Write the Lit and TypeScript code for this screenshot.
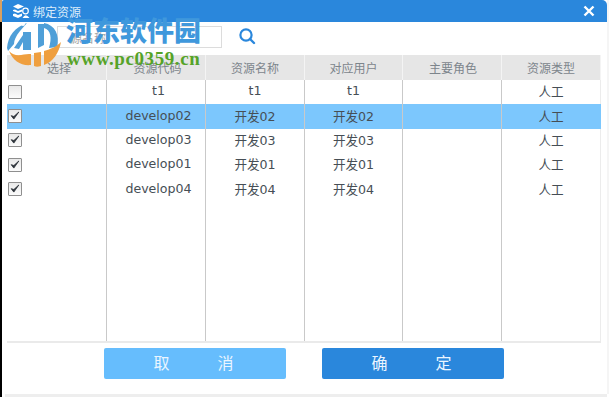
import { LitElement, html, css, svg } from "lit";
import { customElement } from "lit/decorators.js";

const rows = [
  { c: false, code: "t1", name: "t1", user: "t1", sel: false },
  { c: true, code: "develop02", name: "开发02", user: "开发02", sel: true },
  { c: true, code: "develop03", name: "开发03", user: "开发03", sel: false },
  { c: true, code: "develop01", name: "开发01", user: "开发01", sel: false },
  { c: true, code: "develop04", name: "开发04", user: "开发04", sel: false },
];
const heads = ["选择", "资源代码", "资源名称", "对应用户", "主要角色", "资源类型"];

@customElement("app-root")
export class AppRoot extends LitElement {
  static styles = css`
    :host { display: block; width: 609px; height: 400px; position: relative; overflow: hidden; background: #fff;
      font-family: "DejaVu Sans", "Noto Sans CJK SC", sans-serif; color: #464e55; font-size: 12.6px; }
    .frame { height: 394px; box-sizing: border-box; border-right: 2px solid #f5f5f5; border-left: 2px solid #000; display: flex; flex-direction: column; background: #fff; position: relative; }
    .frame::before { content: ""; position: absolute; left: -2px; top: 0; width: 2px; height: 22px; background: #d9a060; }
    .strip { height: 3px; box-sizing: border-box; border-left: 2px solid #000; padding-left: 3px; margin-right: 2px; background: #eeeeee content-box; }
    .title { height: 22px; flex: none; background: #2a87dc; border-radius: 2px 5px 0 0; display: flex; align-items: center; padding: 0 12px 0 9px; font-size: 12px; gap: 3px; }
    .title span { flex: 1; color: #dcecfa; }
    .search { height: 33px; box-sizing: border-box; flex: none; display: flex; align-items: flex-start; padding: 4px 0 0 55px; }
    .box { width: 165px; height: 22px; border: 1px solid #dcdcdc; box-sizing: border-box; display: flex; align-items: center; padding-left: 12px; font-size: 12px; color: #a5a5a5; }
    .search svg { margin: 1px 0 0 16px; }
    .table { margin: 0 6px 0 5px; height: 288px; flex: none; display: grid; grid-template-columns: 100px 99px 99px 98px 99px 99px; grid-template-rows: 25px repeat(5, 24.4px) 1fr; border-bottom: 2px solid #eaeaea; box-sizing: border-box; }
    .h { background: #e6e6e6; display: flex; align-items: center; justify-content: center; color: #7d858c; font-size: 12px; border-right: 1px solid #f4f4f4; box-sizing: border-box; padding-bottom: 1px; }
    .h:nth-child(1) { padding-left: 5px; }
    .h:nth-child(2) { padding-left: 3px; }
    .h:nth-child(5) { padding-left: 2px; }
    .c { display: flex; align-items: center; justify-content: center; border-right: 1px solid #c9c9c9; box-sizing: border-box; padding-bottom: 3px; }
    .c.last { border-right-color: #ececec; }
    .c.sel { background: #7cc7fd; }
    .c.sel.last { border-right-color: #7cc7fd; }
    .c.left { justify-content: flex-start; padding: 0 0 1px 1px; }
    .c.code { padding-left: 5px; }
    .cb { width: 14px; height: 14px; box-sizing: border-box; border: 1px solid #8f8f8f; border-radius: 1px; background: linear-gradient(#e9e9e9, #fbfbfb); display: block; }
    .fill { border-right: 1px solid #c9c9c9; box-sizing: border-box; }
    .fill.last { border-right-color: #ececec; }
    .btns { display: flex; gap: 36px; margin: 5px 0 0 102px; }
    .btn { width: 182px; height: 31px; border-radius: 2px; display: flex; align-items: center; justify-content: center; gap: 48px; color: #eaf5ff; font-size: 16px; padding: 0 3px 3px 0; box-sizing: border-box; }
    .cancel { background: #66bdfd; }
    .ok { background: #2a87dc; }
    .mark { position: absolute; left: 5px; top: 18px; pointer-events: none; }
    .wm1 { position: absolute; left: 66px; top: 14px; font: 900 27px "Noto Sans CJK SC", serif; color: #3f98dc; line-height: 32px; white-space: nowrap; }
    .wm2 { position: absolute; left: 67px; top: 48px; font: bold 19px "Liberation Serif", serif; color: #55a328; line-height: 22px; white-space: nowrap; letter-spacing: .6px; }
  `;

  private check(on: boolean) {
    return html`<svg class="cb" viewBox="0 0 14 14">${on ? svg`<path d="M2.6 6.6 L5.6 10.6 L11.4 2.4 L5.7 7.6 Z" fill="#2b3138" stroke="#2b3138" stroke-width="1"/>` : ""}</svg>`;
  }

  render() {
    return html`
      <div class="frame">
        <div class="title">
          <svg width="19" height="17" viewBox="0 0 19 17"><path d="M2 3.5 L7 1 L13 3.5 L7 6 Z M2 7 L4 6.5 L7 8 L11 6.5 L11 8.5 L7 10 L2 8 Z M2 11 L4 10.5 L7 12 L11 10.5 L11 13 L7 15 L2 13 Z" fill="#fff"/><circle cx="14.5" cy="8" r="2.8" fill="none" stroke="#fff" stroke-width="1.2"/><path d="M11.5 15 Q14.5 9.5 18.5 15 Z" fill="#fff"/></svg>
          <span>绑定资源</span>
          <svg width="12" height="12" viewBox="0 0 12 12"><path d="M1.5 1.5 L10.5 10.5 M10.5 1.5 L1.5 10.5" stroke="#fff" stroke-width="2.4"/></svg>
        </div>
        <div class="search">
          <div class="box">源名称</div>
          <svg width="18" height="18" viewBox="0 0 18 18"><circle cx="8" cy="8" r="5.6" fill="none" stroke="#2a87dc" stroke-width="2.2"/><path d="M12 12 L16 16" stroke="#2a87dc" stroke-width="2.4" stroke-linecap="round"/></svg>
        </div>
        <div class="table">
          ${heads.map((h) => html`<div class="h">${h}</div>`)}
          ${rows.map((r) => {
            const s = r.sel ? "sel" : "";
            return html`
              <div class="c left ${s}">${this.check(r.c)}</div>
              <div class="c code ${s}">${r.code}</div>
              <div class="c ${s}">${r.name}</div>
              <div class="c ${s}">${r.user}</div>
              <div class="c ${s}"></div>
              <div class="c last ${s}">人工</div>`;
          })}
          ${[0, 1, 2, 3, 4, 5].map((i) => html`<div class="fill ${i === 5 ? "last" : ""}"></div>`)}
        </div>
        <div class="btns">
          <div class="btn cancel"><span>取</span><span>消</span></div>
          <div class="btn ok"><span>确</span><span>定</span></div>
        </div>
      </div>
      <div class="strip"></div>
      <svg class="mark" width="60" height="52" viewBox="0 0 60 52">
        <path d="M2 30 C3 18 10 9 22 5 L15 13 C11 18 9 22 9 26 L3 33 Z" fill="#4f9fd8"/>
        <path d="M9 30 L18 17 L18 14 L26 14 L26 32 L18 32 L18 24 L14 31 Z" fill="#4f9fd8"/>
        <path d="M33 6 L39 6 L39 27 L33 30 Z" fill="#4f9fd8"/>
        <path d="M39 5 C50 7 55 17 52 29 L44 30 C47 20 46 12 39 10 Z" fill="#4f9fd8"/>
        <path d="M4 33 C10 40 18 36 24 36 L26 36 L26 47 C16 48 8 43 4 33 Z" fill="#ef9f3f"/>
        <path d="M29 35 L36 34 L36 48 C33 49 31 49 29 48 Z M39 33 C46 31 51 29 56 24 C54 35 48 44 39 47 Z" fill="#ef9f3f"/>
        <circle cx="18" cy="6" r="2" fill="#fff"/>
      </svg>
      <div class="wm1">河东软件园</div>
      <div class="wm2">www.pc0359.cn</div>
    `;
  }
}
